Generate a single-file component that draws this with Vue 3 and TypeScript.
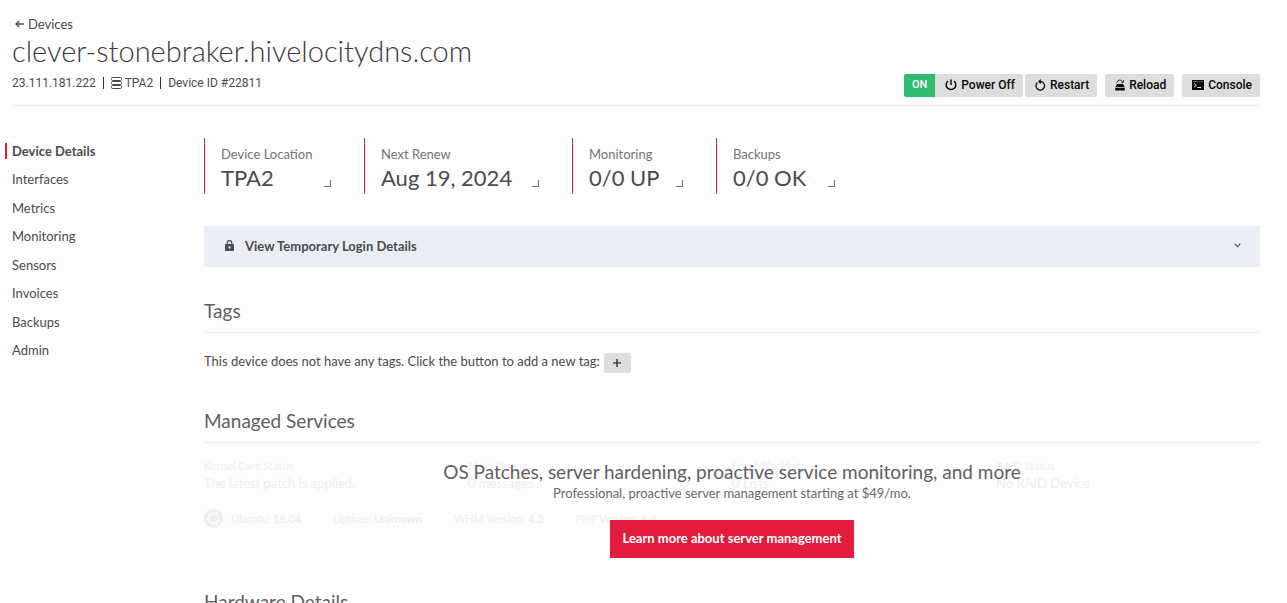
<script setup lang="ts">
const navItems: string[] = [
  'Device Details',
  'Interfaces',
  'Metrics',
  'Monitoring',
  'Sensors',
  'Invoices',
  'Backups',
  'Admin',
]

interface Pair {
  label: string
  value: string
}

const stats: Pair[] = [
  { label: 'Device Location', value: 'TPA2' },
  { label: 'Next Renew', value: 'Aug 19, 2024' },
  { label: 'Monitoring', value: '0/0 UP' },
  { label: 'Backups', value: '0/0 OK' },
]

const services: Pair[] = [
  { label: 'Kernel Care Status', value: 'The latest patch is applied.' },
  { label: 'Main Queue', value: '0 messages' },
  { label: 'Email Blacklist', value: '0 Lists' },
  { label: 'RAID Status', value: 'No RAID Device' },
]

const versions: Pair[] = [
  { label: 'Ubuntu:', value: '18.04' },
  { label: 'Uptime:', value: 'Unknown' },
  { label: 'WHM Version:', value: '4.3' },
  { label: 'PHP Version:', value: '8.4' },
]
</script>

<template>
  <div class="page">
    <header class="header">
      <div class="heading">
        <a class="back" href="#">
          <svg width="10" height="8" viewBox="0 0 10 8" aria-hidden="true">
            <path d="M9 4H1.5M4.2 1L1.2 4l3 3" fill="none" stroke="currentColor" stroke-width="1.5" />
          </svg>
          Devices
        </a>
        <h1>clever-stonebraker.hivelocitydns.com</h1>
        <div class="meta">
          <span>23.111.181.222</span>
          <i class="bar"></i>
          <span class="location">
            <svg width="11" height="12" viewBox="0 0 11 12" fill="none" stroke="currentColor" aria-hidden="true">
              <rect x="0.5" y="0.5" width="10" height="3" rx="1" />
              <rect x="0.5" y="4.5" width="10" height="3" rx="1" />
              <rect x="0.5" y="8.5" width="10" height="3" rx="1" />
            </svg>
            TPA2
          </span>
          <i class="bar"></i>
          <span>Device ID #22811</span>
        </div>
      </div>
      <div class="actions">
        <div class="power">
          <span class="state">ON</span>
          <button type="button" class="btn power-btn">
            <svg width="12" height="12" viewBox="0 0 12 12" fill="none" stroke="currentColor" stroke-width="1.5" aria-hidden="true">
              <path d="M6 0.5v5.5M3 2A4.8 4.8 0 1 0 9 2" />
            </svg>
            Power Off
          </button>
          <button type="button" class="btn">
            <svg width="11" height="12" viewBox="0 0 11 12" aria-hidden="true">
              <path d="M2.4 3.6A4.3 4.3 0 1 0 6 2.6H4" fill="none" stroke="currentColor" stroke-width="1.3" />
              <path d="M5.8 0v5.2L3 2.6z" fill="currentColor" />
            </svg>
            Restart
          </button>
        </div>
        <button type="button" class="btn">
          <svg width="10" height="12" viewBox="0 0 10 12" aria-hidden="true">
            <path d="M2 4V3.2A3 2.8 0 0 1 7.6 2.6M8.4 1v2.4H6" fill="none" stroke="currentColor" stroke-width="0.8" />
            <path d="M2 5h6l1.8 3.2H0.2zM0.2 9h9.6v2.6H0.2z" fill="currentColor" />
          </svg>
          Reload
        </button>
        <button type="button" class="btn">
          <svg width="12" height="10" viewBox="0 0 12 10" aria-hidden="true">
            <rect width="12" height="10" fill="currentColor" />
            <path d="M0.8 1.5h10.4" stroke="#777" stroke-width="0.7" />
            <path d="M2 3.5l2.4 1.8L2 7.1M5.4 7.5h3.6" fill="none" stroke="#ddd" />
          </svg>
          Console
        </button>
      </div>
    </header>

    <div class="layout">
      <nav aria-label="Device">
        <a v-for="(item, i) in navItems" :key="item" href="#" :class="{ active: i === 0 }">{{ item }}</a>
      </nav>

      <main>
        <section class="stats">
          <a v-for="stat in stats" :key="stat.label" href="#" class="stat">
            <span class="stat-label">{{ stat.label }}</span>
            <span class="stat-value">{{ stat.value }}</span>
            <i class="corner"></i>
          </a>
        </section>

        <button type="button" class="login">
          <svg width="9" height="11" viewBox="0 0 9 11" aria-hidden="true">
            <path d="M2.2 4.5V3a2.3 2.3 0 0 1 4.6 0v1.5" fill="none" stroke="currentColor" stroke-width="1.2" />
            <path d="M1 4h7q1 0 1 1v5q0 1-1 1H1q-1 0-1-1V5q0-1 1-1zM3.5 6.5v2h2v-2z" fill="currentColor" fill-rule="evenodd" />
          </svg>
          <span>View Temporary Login Details</span>
          <svg class="chevron" width="7" height="5" viewBox="0 0 7 5" aria-hidden="true">
            <path d="M0.7 0.8l2.8 2.8 2.8-2.8" fill="none" stroke="currentColor" stroke-width="1.2" />
          </svg>
        </button>

        <h2>Tags</h2>
        <div class="tags">
          <span>This device does not have any tags. Click the button to add a new tag:</span>
          <button type="button" class="add" aria-label="Add tag">
            <svg width="8" height="8" viewBox="0 0 8 8" aria-hidden="true">
              <path d="M4 0v8M0 4h8" stroke="currentColor" stroke-width="1.2" />
            </svg>
          </button>
        </div>

        <h2>Managed Services</h2>
        <section class="managed">
          <div class="faded">
            <div class="services">
              <div v-for="service in services" :key="service.label">
                <div class="service-label">{{ service.label }}</div>
                <div class="service-value">{{ service.value }}</div>
              </div>
            </div>
            <div class="versions">
              <svg width="19" height="19" viewBox="0 0 19 19" aria-hidden="true">
                <circle cx="9.5" cy="9.5" r="9.5" fill="currentColor" />
                <circle cx="9.5" cy="9.5" r="4.7" fill="none" stroke="#fdfdfd" stroke-width="1.8" />
                <path d="M9.5 9.5H16M9.5 9.5L6.2 3.8M9.5 9.5L6.2 15.2" stroke="currentColor" stroke-width="1" />
                <g fill="#fdfdfd" stroke="currentColor" stroke-width="0.7">
                  <circle cx="3.6" cy="9.5" r="1.7" />
                  <circle cx="12.5" cy="4.4" r="1.7" />
                  <circle cx="12.5" cy="14.6" r="1.7" />
                </g>
              </svg>
              <span v-for="version in versions" :key="version.label">
                {{ version.label }} <b>{{ version.value }}</b>
              </span>
            </div>
          </div>
          <div class="promo">
            <h3>OS Patches, server hardening, proactive service monitoring, and more</h3>
            <p>Professional, proactive server management starting at $49/mo.</p>
            <button type="button" class="learn">Learn more about server management</button>
          </div>
        </section>

        <h2>Hardware Details</h2>
      </main>
    </div>
  </div>
</template>

<style>
body {
  margin: 0;
  background: #fdfdfd;
}
</style>

<style scoped>
.page {
  box-sizing: border-box;
  height: 100vh;
  overflow: hidden;
  padding: 16px 27px 0 12px;
  font-family: Lato, "Liberation Sans", sans-serif;
  font-size: 13px;
  line-height: 16px;
  color: #4d4a4d;
}
a {
  color: inherit;
  text-decoration: none;
}
button {
  font: inherit;
  border: 0;
  margin: 0;
  cursor: pointer;
}
svg {
  display: block;
  flex: none;
}
h1,
h2,
h3,
p {
  margin: 0;
}
h2,
h3 {
  font-weight: 400;
  color: #625f62;
}
.header {
  display: flex;
  justify-content: space-between;
  align-items: flex-end;
  padding-bottom: 8px;
  border-bottom: 1px solid #ececec;
}
.back {
  display: flex;
  align-items: center;
  gap: 3px;
  padding-left: 3px;
}
h1 {
  font-size: 29px;
  font-weight: 300;
  line-height: 34px;
  margin-top: 2px;
  color: #3c393c;
}
.meta {
  display: flex;
  align-items: center;
  gap: 7px;
  margin: 7px 0 6px;
  font-family: Roboto, "Liberation Sans", sans-serif;
  font-size: 12px;
}
.bar {
  width: 1px;
  height: 12px;
  background: #5a2020;
}
.location {
  display: flex;
  align-items: center;
  gap: 3px;
}
.actions {
  display: flex;
  gap: 8px;
}
.power {
  display: flex;
}
.state,
.btn {
  display: flex;
  align-items: center;
  height: 23px;
  box-sizing: border-box;
  font-family: Roboto, "Liberation Sans", sans-serif;
  font-size: 12px;
  font-weight: 500;
}
.state {
  padding: 0 8px 2px;
  font-size: 11px;
  background: #33ba73;
  color: #fff;
  border-radius: 2px 0 0 2px;
}
.btn {
  gap: 4px;
  padding: 0 8px 2px 10px;
  background: #ddd;
  color: #0c0810;
  border-radius: 2px;
}
.power-btn {
  border-radius: 0 2px 2px 0;
  margin-right: 2px;
}
.layout {
  display: grid;
  grid-template-columns: 192px minmax(0, 1fr);
}
nav {
  display: flex;
  flex-direction: column;
  justify-content: space-between;
  height: 215px;
  margin-top: 37px;
}
nav a {
  line-height: 16px;
  margin-left: -7px;
  padding-left: 5px;
  border-left: 2px solid transparent;
}
nav a.active {
  font-weight: 700;
  border-left-color: #e31c3d;
}
.stats {
  display: grid;
  grid-template-columns: 128px 176px 112px 120px;
  gap: 32px;
  margin: 32px 0;
}
.stat {
  position: relative;
  display: flex;
  flex-direction: column;
  box-sizing: border-box;
  height: 56px;
  padding: 8px 0 0 16px;
  border-left: 1px solid #e31c3d;
  white-space: nowrap;
}
.stat-label {
  color: #757275;
}
.stat-value {
  font-size: 22px;
  line-height: 32px;
}
.corner {
  position: absolute;
  right: 1px;
  bottom: 7px;
  width: 6px;
  height: 6px;
  border-right: 1px solid #757275;
  border-bottom: 1px solid #757275;
}
.login {
  display: flex;
  align-items: center;
  gap: 11px;
  width: 100%;
  height: 41px;
  padding: 0 19px 2px 21px;
  background: #e9eef6;
  color: #4d4a4d;
  font-weight: 700;
}
.chevron {
  margin-left: auto;
}
h2 {
  font-size: 19px;
  line-height: 24px;
  margin-top: 32px;
  padding-bottom: 9px;
  border-bottom: 1px solid #ececec;
}
.tags {
  display: flex;
  align-items: flex-start;
  gap: 4px;
  padding: 20px 0 4px;
}
.add {
  display: flex;
  align-items: center;
  justify-content: center;
  width: 27px;
  height: 20px;
  padding: 0;
  background: #ddd;
  color: #111;
  border-radius: 2px;
}
.managed {
  position: relative;
  box-sizing: border-box;
  height: 115px;
  padding-top: 15px;
}
.faded {
  color: #eeeeef;
}
.services {
  display: grid;
  grid-template-columns: repeat(4, 1fr);
}
.service-label {
  font-size: 11px;
}
.service-value {
  line-height: 18px;
}
.versions {
  display: flex;
  align-items: center;
  margin-top: 17px;
  font-size: 11px;
}
.versions span {
  margin-left: 8px;
  margin-right: 24px;
}
.promo {
  position: absolute;
  inset: 0;
  display: flex;
  flex-direction: column;
  align-items: center;
  padding-top: 16px;
}
h3 {
  font-size: 19px;
  line-height: 26px;
}
.promo p {
  color: #6b686b;
}
.learn {
  height: 38px;
  margin-top: 19px;
  padding: 0 12px 2px;
  background: #e31c3d;
  color: #fff;
  font-weight: 700;
}
</style>
